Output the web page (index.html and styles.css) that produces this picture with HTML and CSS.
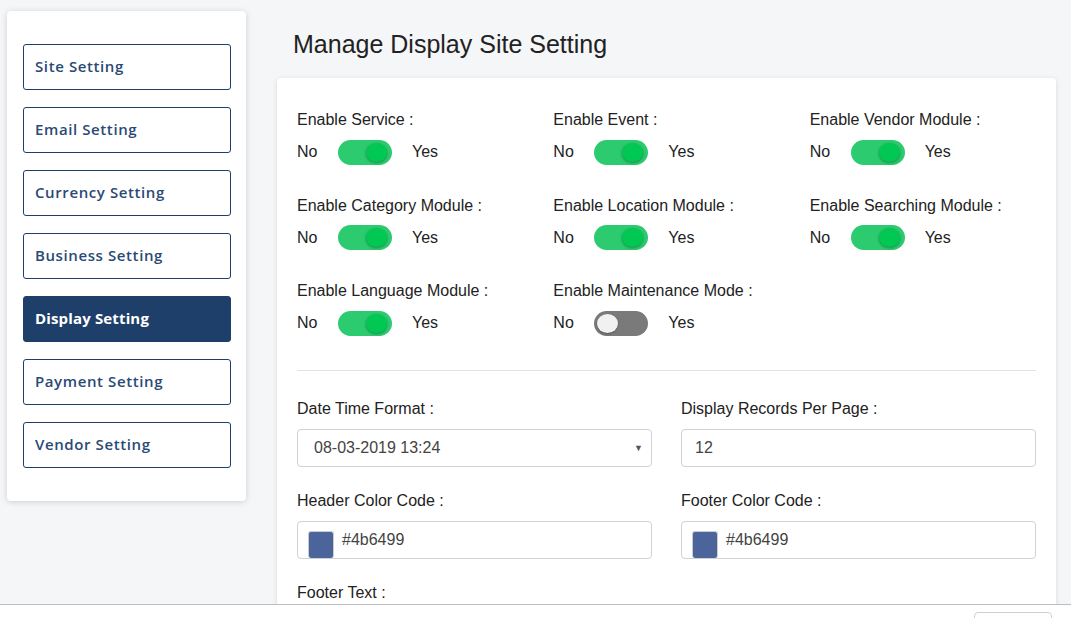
FILE: index.html
```html
<!DOCTYPE html>
<html>
<head>
<meta charset="utf-8">
<link rel="stylesheet" href="styles.css">
</head>
<body>
<div class="page">
  <aside class="sidebar">
    <a class="side-btn">Site Setting</a>
    <a class="side-btn">Email Setting</a>
    <a class="side-btn">Currency Setting</a>
    <a class="side-btn">Business Setting</a>
    <a class="side-btn active">Display Setting</a>
    <a class="side-btn">Payment Setting</a>
    <a class="side-btn">Vendor Setting</a>
  </aside>
  <main class="main">
    <h1 class="title">Manage Display Site Setting</h1>
    <section class="card">
      <div class="toggle-grid">
        <div class="field">
          <div class="label">Enable Service :</div>
          <div class="switch-row"><span>No</span><span class="switch on"><span class="knob"></span></span><span>Yes</span></div>
        </div>
        <div class="field">
          <div class="label">Enable Event :</div>
          <div class="switch-row"><span>No</span><span class="switch on"><span class="knob"></span></span><span>Yes</span></div>
        </div>
        <div class="field">
          <div class="label">Enable Vendor Module :</div>
          <div class="switch-row"><span>No</span><span class="switch on"><span class="knob"></span></span><span>Yes</span></div>
        </div>
        <div class="field">
          <div class="label">Enable Category Module :</div>
          <div class="switch-row"><span>No</span><span class="switch on"><span class="knob"></span></span><span>Yes</span></div>
        </div>
        <div class="field">
          <div class="label">Enable Location Module :</div>
          <div class="switch-row"><span>No</span><span class="switch on"><span class="knob"></span></span><span>Yes</span></div>
        </div>
        <div class="field">
          <div class="label">Enable Searching Module :</div>
          <div class="switch-row"><span>No</span><span class="switch on"><span class="knob"></span></span><span>Yes</span></div>
        </div>
        <div class="field">
          <div class="label">Enable Language Module :</div>
          <div class="switch-row"><span>No</span><span class="switch on"><span class="knob"></span></span><span>Yes</span></div>
        </div>
        <div class="field">
          <div class="label">Enable Maintenance Mode :</div>
          <div class="switch-row"><span>No</span><span class="switch off"><span class="knob"></span></span><span>Yes</span></div>
        </div>
      </div>
      <hr class="divider">
      <div class="form-grid">
        <div class="ffield">
          <div class="label">Date Time Format :</div>
          <div class="select"><span>08-03-2019 13:24</span><span class="caret">▼</span></div>
        </div>
        <div class="ffield">
          <div class="label">Display Records Per Page :</div>
          <div class="input">12</div>
        </div>
        <div class="ffield">
          <div class="label">Header Color Code :</div>
          <div class="color-input"><span class="swatch"></span><span class="ctext">#4b6499</span></div>
        </div>
        <div class="ffield">
          <div class="label">Footer Color Code :</div>
          <div class="color-input"><span class="swatch"></span><span class="ctext">#4b6499</span></div>
        </div>
        <div class="ffield">
          <div class="label">Footer Text :</div>
          <div class="input tall"></div>
        </div>
      </div>
    </section>
  </main>
</div>
<footer class="footer-bar"><span class="footer-btn"></span></footer>
</body>
</html>
```
FILE: styles.css
```css
* { box-sizing: border-box; }
html, body { margin: 0; padding: 0; }
body {
  background: #f5f6f8;
  font-family: "Liberation Sans", Arial, sans-serif;
  color: #222;
  height: 618px;
  overflow: hidden;
}
.page {
  display: flex;
  align-items: flex-start;
}
.sidebar {
  width: 239px;
  margin: 11px 0 0 7px;
  background: #fff;
  border-radius: 4px;
  box-shadow: 0 1px 6px rgba(0,0,0,0.16);
  padding: 33px 15px 33px 16px;
  display: flex;
  flex-direction: column;
  gap: 17px;
}
.side-btn {
  display: flex;
  align-items: center;
  height: 46px;
  padding: 0 11px 2px 11px;
  border: 1px solid #1f3f6b;
  border-radius: 3px;
  color: #2a4a75;
  font-family: "Open Sans", sans-serif;
  font-weight: 600;
  font-size: 15px;
  letter-spacing: 0.6px;
}
.side-btn.active {
  background: #1f3f6b;
  color: #fff;
  font-weight: 700;
  letter-spacing: 0.15px;
}
.main {
  margin-left: 31px;
  width: 779px;
}
.title {
  margin: 30px 0 19px 16px;
  font-size: 25px;
  font-weight: 400;
  line-height: 29px;
  color: #222;
}
.card {
  background: #fff;
  border-radius: 4px;
  box-shadow: 0 1px 5px rgba(0,0,0,0.12);
  padding: 30px 20px 40px 20px;
  height: 600px;
}
.label {
  font-size: 16px;
  line-height: 24px;
  color: #222;
}
.toggle-grid {
  display: grid;
  grid-template-columns: repeat(3, 1fr);
  column-gap: 30px;
  row-gap: 28.5px;
}
.switch-row {
  margin-top: 7px;
  display: flex;
  align-items: center;
  gap: 20px;
  font-size: 16px;
  height: 26px;
}
.switch-row span:first-child { width: 21px; }
.switch {
  position: relative;
  width: 54px;
  height: 25px;
  border-radius: 13px;
  background: #2dcb6f;
  display: inline-block;
}
.switch .knob {
  position: absolute;
  top: 3px;
  right: 5px;
  width: 19px;
  height: 19px;
  border-radius: 50%;
  background: #00c853;
  box-shadow: 0 1px 3px rgba(0,0,0,0.35);
}
.switch.off { background: #7a7a7a; }
.switch.off .knob {
  right: auto;
  left: 3px;
  background: #f1f1f1;
  box-shadow: 0 1px 2px rgba(0,0,0,0.3);
}
.divider {
  border: 0;
  border-top: 1px solid #e3e3e3;
  margin: 34px 0 26px 0;
}
.form-grid {
  display: grid;
  grid-template-columns: 1fr 1fr;
  column-gap: 29px;
  row-gap: 22px;
}
.ffield .label { margin-bottom: 8px; }
.select, .input, .color-input {
  height: 38px;
  border: 1px solid #cfd3d8;
  border-radius: 4px;
  font-size: 16px;
  color: #444;
  display: flex;
  align-items: center;
}
.select {
  padding: 0 8px 0 16px;
  justify-content: space-between;
}
.caret { font-size: 9px; color: #555; }
.input { padding: 0 13px; }
.input.tall { height: 80px; }
.color-input {
  height: 38px;
  padding: 0 0 0 10px;
  align-items: flex-end;
}
.swatch {
  width: 26px;
  height: 27px;
  background: #4b6499;
  border-radius: 3px;
  border: 1px solid #c8ccd4;
  border-bottom: 0;
}
.ctext {
  align-self: flex-start;
  margin-top: 9px;
  margin-left: 8px;
  line-height: 18px;
}
.footer-bar {
  position: fixed;
  left: 0;
  right: 0;
  bottom: 0;
  height: 14px;
  background: #fff;
  border-top: 1px solid #bdbdbd;
}
.footer-btn {
  position: absolute;
  left: 974px;
  top: 7px;
  width: 78px;
  height: 30px;
  border: 1px solid #d0d0d0;
  border-radius: 4px;
}
```
